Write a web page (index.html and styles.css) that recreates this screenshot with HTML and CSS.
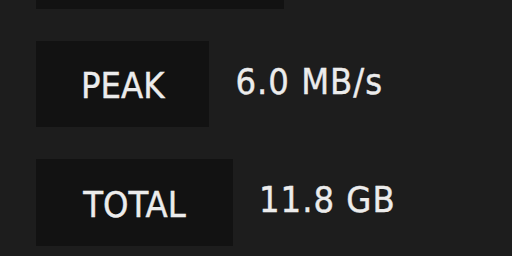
FILE: index.html
```html
<!DOCTYPE html>
<html>
<head>
<meta charset="utf-8">
<link rel="stylesheet" href="styles.css">
</head>
<body>
<div class="stats">
  <div class="row">
    <div class="label label-top"></div>
  </div>
  <div class="row">
    <div class="label">PEAK</div>
    <div class="value">6.0 MB/s</div>
  </div>
  <div class="row">
    <div class="label label-total">TOTAL</div>
    <div class="value">11.8 GB</div>
  </div>
</div>
</body>
</html>
```
FILE: styles.css
```css
html, body {
  margin: 0;
  padding: 0;
  background: #1d1d1d;
  overflow: hidden;
}
body {
  width: 512px;
  height: 256px;
  font-family: "DejaVu Sans Condensed", "DejaVu Sans", sans-serif;
  font-stretch: condensed;
  color: #ececec;
}
.stats {
  display: flex;
  flex-direction: column;
  gap: 32px;
  margin-top: -77px;
  padding-left: 36px;
}
.row {
  display: flex;
  align-items: center;
  gap: 26px;
}
.label {
  background: #121212;
  height: 86px;
  padding: 3px 45px 0;
  display: flex;
  align-items: center;
  justify-content: center;
  font-size: 36px;
  box-sizing: border-box;
  -webkit-text-stroke: 0.4px #ececec;
}
.label-top {
  width: 248px;
}
.label-total {
  min-width: 197px;
  height: 87px;
}
.value {
  font-size: 36px;
  letter-spacing: 1px;
  padding-bottom: 6px;
  -webkit-text-stroke: 0.4px #ececec;
}
```
